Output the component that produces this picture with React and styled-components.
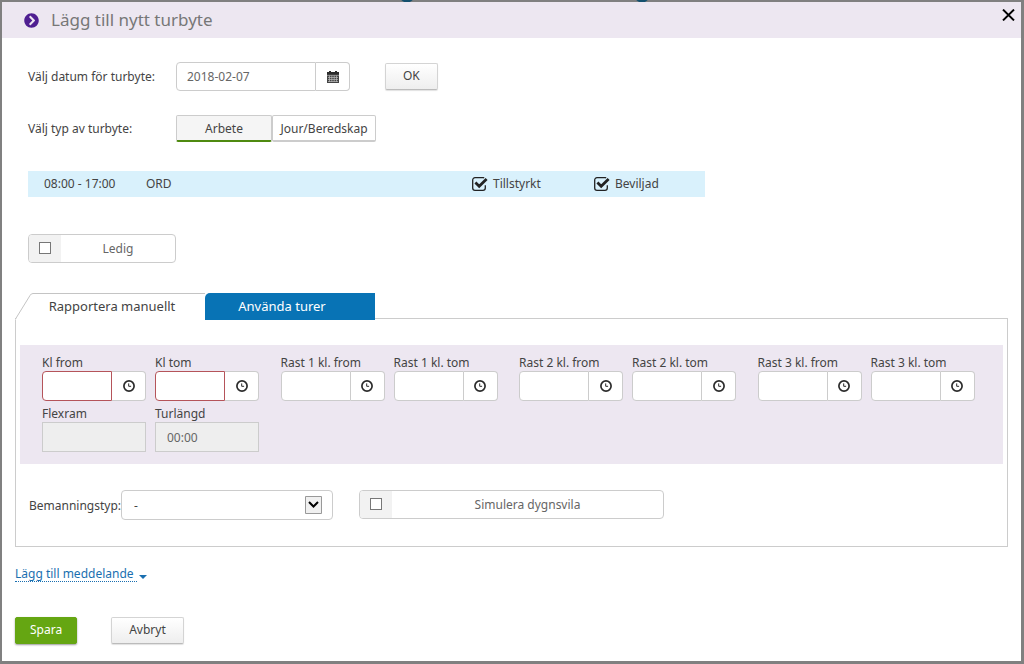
import React, { useState } from "react";
import styled, { createGlobalStyle, css } from "styled-components";
import { FaChevronCircleRight } from "react-icons/fa";

const breaks = [1, 2, 3];

const CalendarIcon = () => (
  <svg width="12" height="12" viewBox="0 0 12 12" aria-hidden="true">
    <path fill="#2b2b2b" d="M0 1h2V0h2v1h4V0h2v1h2v3H0z" />
    <path fill="#444" d="M0 4h12v8H0z" />
    <path stroke="#bbb" strokeWidth="0.7" d="M0 4.3h12M1 6.5h10M1 8.5h10M1 10.5h10M2.5 4.5V11M4.8 4.5V11M7.2 4.5V11M9.5 4.5V11" />
  </svg>
);

const ClockIcon = () => (
  <svg width="12" height="12" viewBox="0 0 12 12" fill="none" stroke="#2b2b2b" aria-hidden="true">
    <circle cx="6" cy="6" r="5.1" strokeWidth="1.7" />
    <path d="M5.7 3.4v2.9h2.4" strokeWidth="1" />
  </svg>
);

const CheckIcon = () => (
  <svg width="16" height="14" viewBox="0 0 16 14" fill="none" stroke="#222" aria-hidden="true">
    <path d="M12.2 0.9A2.2 2.2 0 0 0 11 0.7H3A2.3 2.3 0 0 0 0.7 3v8A2.3 2.3 0 0 0 3 13.3h8a2.3 2.3 0 0 0 2.3-2.3V8.3" strokeWidth="1.3" />
    <path d="M3.4 5.6l3.8 3.7 7.4-7.2" strokeWidth="2.8" />
  </svg>
);

const CloseIcon = () => (
  <svg width="13" height="12" viewBox="0 0 13 12" stroke="#000" strokeWidth="2" aria-hidden="true">
    <path d="M1 0.6l11 10.8M12 0.6L1 11.4" />
  </svg>
);

const TimeField = ({ id, label, required }) => (
  <Field>
    <FieldLabel htmlFor={id}>{label}</FieldLabel>
    <InputGroup>
      <GroupInput id={id} $required={required} />
      <GroupButton type="button" aria-label={`Välj tid, ${label}`}>
        <ClockIcon />
      </GroupButton>
    </InputGroup>
  </Field>
);

const StatusCheck = ({ label }) => {
  const [checked, setChecked] = useState(true);

  return (
    <StatusLabel>
      <StatusBox>
        <StatusInput type="checkbox" checked={checked} onChange={() => setChecked(!checked)} />
        {checked && <CheckIcon />}
      </StatusBox>
      {label}
    </StatusLabel>
  );
};

const App = () => {
  const [type, setType] = useState("arbete");
  const [date, setDate] = useState("2018-02-07");

  return (
    <>
      <GlobalStyle />
      <Dialog role="dialog" aria-labelledby="dialogTitle">
        <Header>
          <FaChevronCircleRight size={15} color="#4f1f91" />
          <Title id="dialogTitle">Lägg till nytt turbyte</Title>
          <CloseBtn type="button" aria-label="Stäng">
            <CloseIcon />
          </CloseBtn>
        </Header>

        <Content>
          <TopSection>
            <FormRow>
              <RowLabel htmlFor="date">Välj datum för turbyte:</RowLabel>
              <DateGroup>
                <GroupInput id="date" value={date} onChange={(e) => setDate(e.target.value)} />
                <GroupButton type="button" aria-label="Öppna kalender">
                  <CalendarIcon />
                </GroupButton>
              </DateGroup>
              <Button type="button">OK</Button>
            </FormRow>

            <FormRow>
              <RowLabel as="span">Välj typ av turbyte:</RowLabel>
              <TypeSwitch>
                <TypeBtn type="button" $active={type === "arbete"} onClick={() => setType("arbete")}>
                  Arbete
                </TypeBtn>
                <TypeBtn type="button" $active={type === "jour"} onClick={() => setType("jour")}>
                  Jour/Beredskap
                </TypeBtn>
              </TypeSwitch>
            </FormRow>

            <ShiftRow>
              <span>08:00 - 17:00</span>
              <span>ORD</span>
              <StatusCheck label="Tillstyrkt" />
              <StatusCheck label="Beviljad" />
            </ShiftRow>

            <CheckButton $width={148}>
              <CheckCell><CheckInput type="checkbox" /></CheckCell>
              <CheckText>Ledig</CheckText>
            </CheckButton>
          </TopSection>

          <Tabs role="tablist">
            <TabSlope width="18" height="27" viewBox="0 0 18 27" aria-hidden="true">
              <path d="M0.5 26.5L15 2.5Q16 0.5 18 0.5V27H0.5z" fill="#fff" />
              <path d="M0.5 26L15 2.5Q16 0.5 18 0.5" fill="none" stroke="#c4c4c4" />
            </TabSlope>
            <ActiveTab type="button" role="tab" aria-selected="true">Rapportera manuellt</ActiveTab>
            <BlueTab type="button" role="tab" aria-selected="false">Använda turer</BlueTab>
          </Tabs>

          <Panel>
            <TimeArea>
              <Pair>
                <TimeField id="from" label="Kl from" required />
                <TimeField id="tom" label="Kl tom" required />
                <Field>
                  <FieldLabel htmlFor="flexram">Flexram</FieldLabel>
                  <ReadOnlyInput id="flexram" readOnly value="" />
                </Field>
                <Field>
                  <FieldLabel htmlFor="turlangd">Turlängd</FieldLabel>
                  <ReadOnlyInput id="turlangd" readOnly value="00:00" />
                </Field>
              </Pair>
              {breaks.map((n) => (
                <Pair key={n}>
                  <TimeField id={`rast${n}from`} label={`Rast ${n} kl. from`} />
                  <TimeField id={`rast${n}tom`} label={`Rast ${n} kl. tom`} />
                </Pair>
              ))}
            </TimeArea>

            <StaffRow>
              <StaffLabel htmlFor="bemanning">Bemanningstyp:</StaffLabel>
              <StaffSelect id="bemanning">
                <option>-</option>
              </StaffSelect>
              <CheckButton $width={305}>
                <CheckCell><CheckInput type="checkbox" /></CheckCell>
                <CheckText>Simulera dygnsvila</CheckText>
              </CheckButton>
            </StaffRow>
          </Panel>

          <MessageRow>
            <MessageLink href="#meddelande">Lägg till meddelande</MessageLink>
            <Caret width="8" height="4" viewBox="0 0 8 4" aria-hidden="true">
              <path d="M0 0h8L4 4z" fill="#1a6fb0" />
            </Caret>
          </MessageRow>

          <Footer>
            <SaveButton type="button">Spara</SaveButton>
            <Button type="button">Avbryt</Button>
          </Footer>
        </Content>
      </Dialog>
    </>
  );
};

export default App;

const GlobalStyle = createGlobalStyle`
  * {
    box-sizing: border-box;
  }
  body {
    margin: 0;
    padding: 2px 3px 3px 2px;
    min-height: 100vh;
    background:
      radial-gradient(circle at 407px -5px, #14506e 7px, transparent 8px),
      radial-gradient(circle at 642px -5px, #14506e 7px, transparent 8px),
      #808080;
    color: #444;
  }
  body, button, input, select {
    font-family: "Noto Sans", "Open Sans", sans-serif;
    font-size: 12px;
  }
`

const Dialog = styled.main`
  background: #fff;
`

const Header = styled.header`
  display: flex;
  align-items: center;
  height: 36px;
  padding: 0 6px 0 22px;
  background: #ede7f1;
`

const Title = styled.h1`
  flex: 1;
  margin: 0 0 0 12px;
  font-size: 17px;
  font-weight: 400;
  line-height: 24px;
  color: #777;
`

const CloseBtn = styled.button`
  display: flex;
  align-self: flex-start;
  margin-top: 7px;
  padding: 0;
  border: 0;
  background: none;
  cursor: pointer;
`

const Content = styled.div`
  padding: 24px 13px 17px;
`

const TopSection = styled.div`
  padding-left: 13px;
`

const FormRow = styled.div`
  display: flex;
  align-items: center;
  height: 29px;
  margin-bottom: 23px;
`

const RowLabel = styled.label`
  width: 148px;
`

const InputGroup = styled.div`
  display: flex;
  height: 30px;
`

const DateGroup = styled(InputGroup)`
  width: 174px;
  height: 29px;
  margin-right: 35px;
`

const GroupInput = styled.input`
  flex: 1;
  min-width: 0;
  padding: 0 10px;
  border: 1px solid ${(props) => (props.$required ? "#b5545a" : "#ccc")};
  border-radius: 4px 0 0 4px;
  background: #fff;
  color: #666;
`

const GroupButton = styled.button`
  display: flex;
  align-items: center;
  justify-content: center;
  width: 34px;
  padding: 0;
  border: 1px solid #ccc;
  border-left: 0;
  border-radius: 0 4px 4px 0;
  background: #fff;
  cursor: pointer;
`

const Button = styled.button`
  height: 27px;
  padding: 0 17px 2px;
  border: 1px solid #d4d4d4;
  border-bottom-color: #bbb;
  border-radius: 2px;
  background: linear-gradient(#fff, #eee);
  box-shadow: 0 1px 1px rgba(0, 0, 0, 0.12);
  color: #444;
  cursor: pointer;
`

const SaveButton = styled(Button)`
  padding: 0 14px 2px;
  border-color: #65a612;
  background: #65a612;
  box-shadow: 0 1px 2px rgba(0, 0, 0, 0.4);
  color: #fff;
`

const TypeSwitch = styled.div`
  display: grid;
  grid-template-columns: 96px 104px;
`

const TypeBtn = styled.button`
  height: 27px;
  padding: 0;
  border: 1px solid #ccc;
  border-bottom: 2px solid #ccc;
  border-radius: 2px;
  background: #fff;
  color: #444;
  cursor: pointer;

  ${(props) => props.$active && css`
    border-bottom-color: #4f8a10;
    background: #f5f5f5;
  `}
`

// beviljat pass för valt datum
const ShiftRow = styled.div`
  display: grid;
  grid-template-columns: 102px 326px 122px 1fr;
  align-items: center;
  max-width: 677px;
  height: 26px;
  margin: 28px 0 37px;
  padding: 0 0 1px 16px;
  background: #d9f1fc;
`

const StatusLabel = styled.label`
  display: flex;
  align-items: center;
  gap: 5px;
`

const StatusBox = styled.span`
  display: grid;
  width: 16px;
  height: 14px;

  > * {
    grid-area: 1 / 1;
  }
`

const StatusInput = styled.input`
  appearance: none;
  width: 14px;
  height: 14px;
  margin: 0;

  &:not(:checked) {
    border: 1px solid #222;
    border-radius: 2px;
  }
`

const CheckButton = styled.label`
  display: flex;
  width: ${(props) => props.$width}px;
  height: 29px;
  border: 1px solid #ccc;
  border-radius: 4px;
  background: #fff;
  color: #666;
  overflow: hidden;
  cursor: pointer;
`

const CheckCell = styled.span`
  display: flex;
  align-items: center;
  justify-content: center;
  width: 32px;
  padding-bottom: 1px;
  background: #f2f2f2;
`

const CheckInput = styled.input`
  appearance: none;
  width: 12px;
  height: 12px;
  margin: 0;
  border: 1px solid #777;
  background: #fff;

  &:checked {
    background: #777;
  }
`

const CheckText = styled.span`
  flex: 1;
  text-align: center;
  line-height: 27px;
`

const Tabs = styled.div`
  display: flex;
  height: 27px;
  margin-top: 30px;
`

const TabSlope = styled.svg`
  flex: none;
`

const Tab = styled.button`
  height: 27px;
  border: 0;
  font-size: 13px;
  cursor: pointer;
`

const ActiveTab = styled(Tab)`
  width: 172px;
  padding: 0 14px 2px 0;
  border-top: 1px solid #c4c4c4;
  background: #fff;
  color: #444;
`

const BlueTab = styled(Tab)`
  width: 170px;
  padding: 0 16px 2px 0;
  border-radius: 5px 0 0 0;
  background: #0873b5;
  color: #fff;
`

const Panel = styled.section`
  margin-top: -2px;
  padding: 26px 4px;
  border: 1px solid #ccc;
`

const TimeArea = styled.div`
  display: grid;
  grid-template-columns: repeat(4, 1fr);
  align-items: start;
  padding: 10px 7px 12px 22px;
  background: #ede7f1;
`

const Pair = styled.div`
  display: grid;
  grid-template-columns: 104px 104px;
  gap: 5px 9px;
`

const Field = styled.div`
  min-width: 0;
`

const FieldLabel = styled.label`
  display: block;
  line-height: 16px;
  white-space: nowrap;
`

const ReadOnlyInput = styled.input`
  display: block;
  width: 100%;
  height: 30px;
  padding: 0 11px;
  border: 1px solid #ccc;
  background: #eee;
  color: #666;
`

const StaffRow = styled.div`
  display: flex;
  height: 30px;
  margin-top: 26px;
  padding-left: 9px;
`

const StaffLabel = styled.label`
  width: 92px;
  line-height: 32px;
  white-space: nowrap;
`

const StaffSelect = styled.select`
  appearance: none;
  width: 212px;
  height: 30px;
  margin-right: 26px;
  padding: 0 12px;
  border: 1px solid #ccc;
  border-radius: 4px;
  background: #fff url("data:image/svg+xml,%3Csvg xmlns='http://www.w3.org/2000/svg' width='17' height='18'%3E%3Cpath d='M.5.5h16v17H.5z' fill='%23f0f0f0' stroke='%23999'/%3E%3Cpath d='M4 6l4.500 4.500L13 6' fill='none' stroke='%23000' stroke-width='2'/%3E%3C/svg%3E") no-repeat right 10px center;
  color: #444;
`

const MessageRow = styled.div`
  display: flex;
  align-items: flex-end;
  margin-top: 19px;
`

const MessageLink = styled.a`
  padding-right: 3px;
  border-bottom: 1px dotted #1a6fb0;
  color: #1a6fb0;
  line-height: 15px;
  text-decoration: none;
`

const Caret = styled.svg`
  margin: 0 0 3px 2px;
`

const Footer = styled.footer`
  display: flex;
  gap: 34px;
  margin-top: 35px;
`
